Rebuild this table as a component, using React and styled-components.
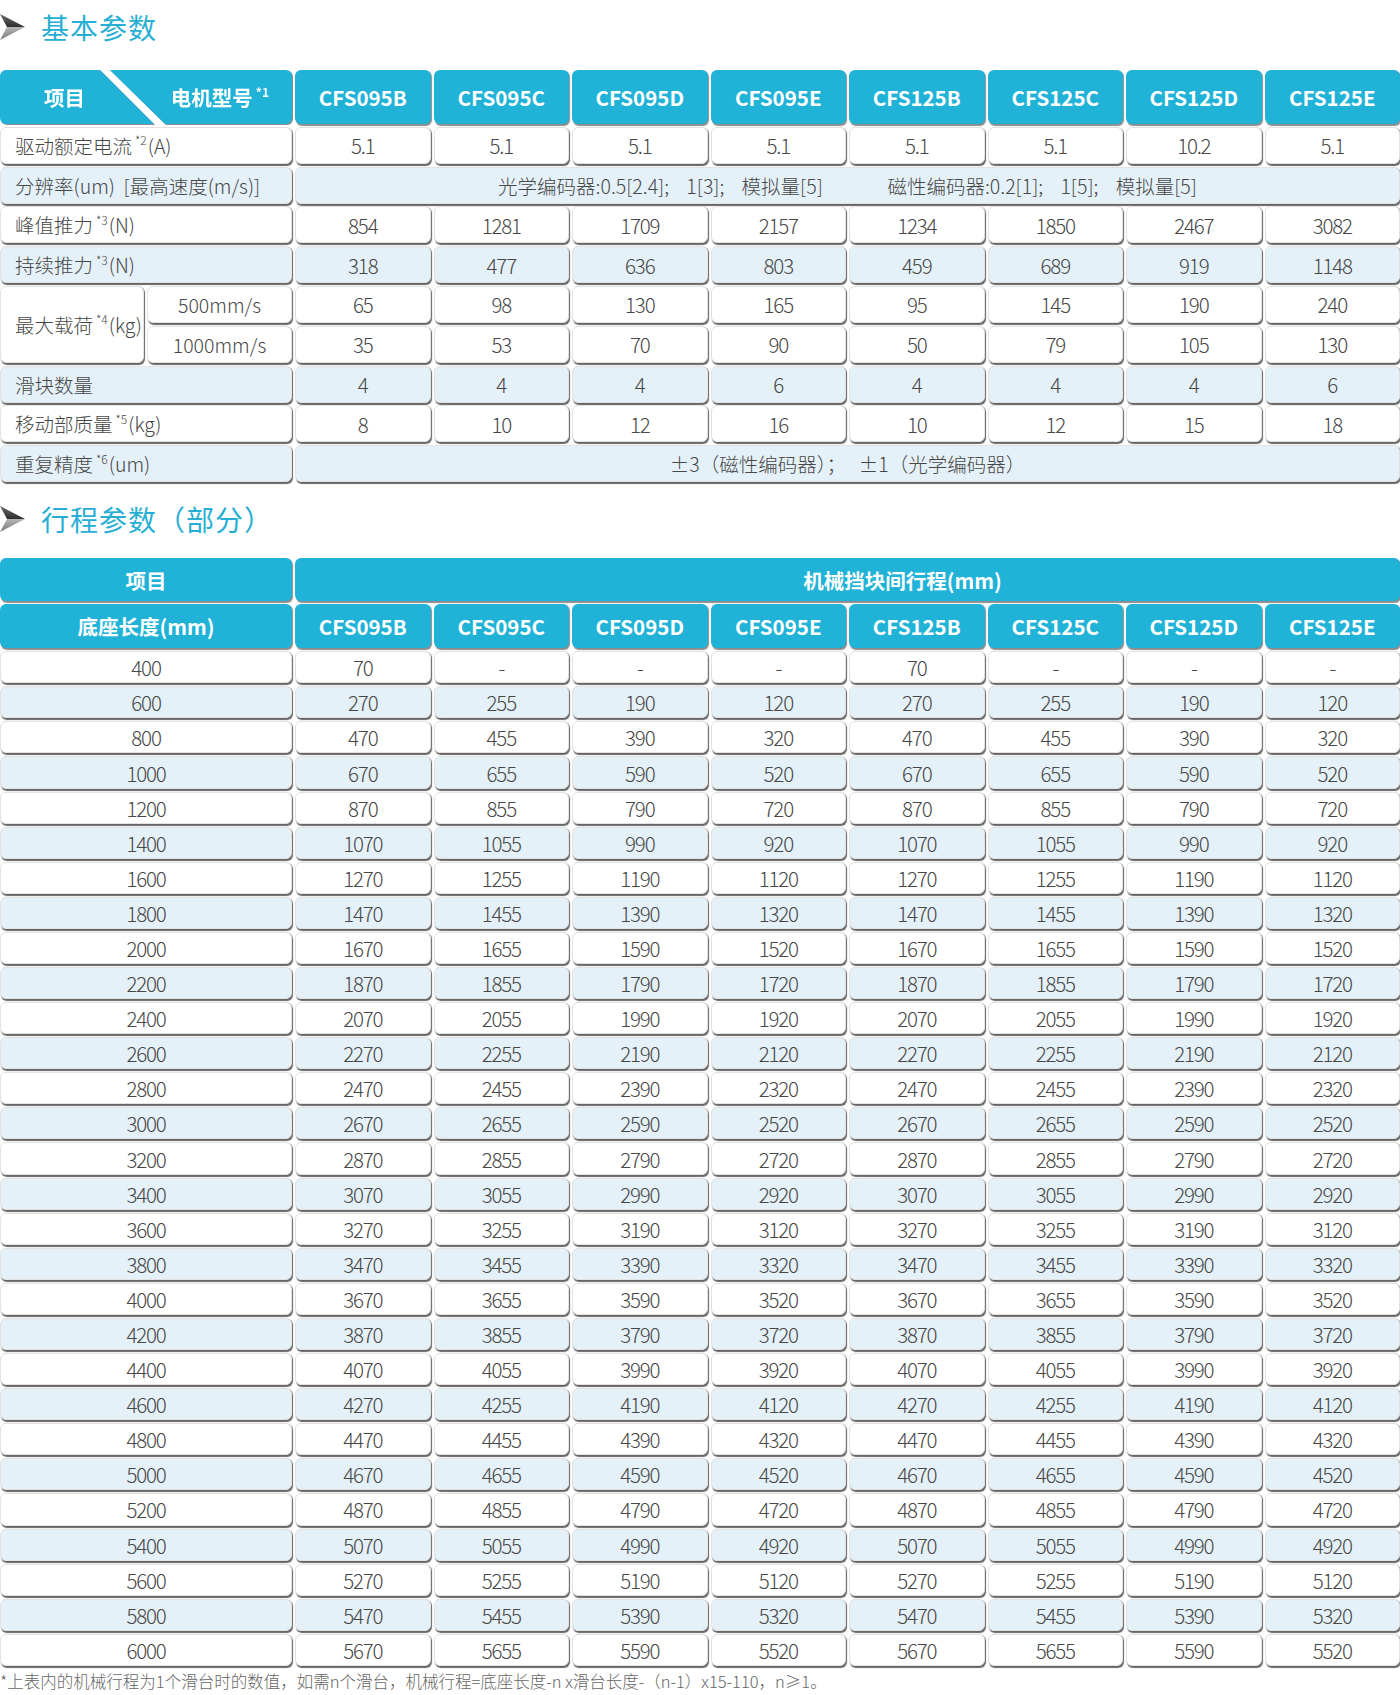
import React from 'react';
import styled, { createGlobalStyle } from 'styled-components';

const CYAN = '#20b3d7';
const LIGHT = '#e5f1f8';

const GlobalStyle = createGlobalStyle`
  html, body {
    margin: 0;
    padding: 0;
    background: #fff;
  }
  body {
    font-family: "Noto Sans CJK SC", "Noto Sans", sans-serif;
    color: #4a4a4a;
  }
`;

const Page = styled.div`
  width: 1400px;
  height: 1695px;
  overflow: hidden;
`;

const Title = styled.h2`
  display: flex;
  align-items: center;
  gap: 15px;
  height: 54px;
  margin: 0 0 ${p => p.$below}px 0;
  font-size: 28px;
  font-weight: 400;
  color: #27aed5;
  letter-spacing: 1px;
`;

const Arrow = () => (
  <svg width="26" height="28" viewBox="0 0 26 28">
    <defs>
      <linearGradient id="arrTop" x1="0" y1="0" x2="0" y2="1">
        <stop offset="0" stopColor="#6a6a6a" />
        <stop offset="1" stopColor="#2e2e2e" />
      </linearGradient>
      <linearGradient id="arrBot" x1="0" y1="0" x2="0" y2="1">
        <stop offset="0" stopColor="#b5b5b5" />
        <stop offset="1" stopColor="#7a7a7a" />
      </linearGradient>
    </defs>
    <polygon points="0,1 25,14 7,14" fill="url(#arrTop)" />
    <polygon points="7,14 25,14 0,27" fill="url(#arrBot)" />
  </svg>
);

const SpecGrid = styled.div`
  display: grid;
  grid-template-columns: 144px 145px repeat(8, 1fr);
  grid-template-rows: 54px repeat(9, 37px);
  column-gap: 3px;
  row-gap: 2.8px;
  margin-bottom: 10px;
`;

const StrokeGrid = styled.div`
  display: grid;
  grid-template-columns: 292px repeat(8, 1fr);
  grid-template-rows: 43px 44px repeat(29, 32.1px);
  column-gap: 3px;
  row-gap: 3px;
`;

const Cell = styled.div`
  grid-column: span ${p => p.$span || 1};
  grid-row: span ${p => p.$rows || 1};
  display: flex;
  align-items: center;
  justify-content: ${p => (p.$left ? 'flex-start' : 'center')};
  padding: 0 ${p => (p.$left ? '14px' : '0')};
  padding-left: ${p => (p.$shift ? `${p.$shift}px` : undefined)};
  box-sizing: border-box;
  border-radius: 6px;
  background: ${p => (p.$blue ? LIGHT : '#fff')};
  border: 1px solid #e2e2e2;
  box-shadow: 1px 1.5px 1px rgba(0, 0, 0, 0.6);
  font-size: ${p => (p.$num ? '20.5px' : '19.5px')};
  font-weight: 300;
  letter-spacing: ${p => (p.$num ? '-1.2px' : '0')};
  white-space: pre;
  color: #474747;
`;

const Head = styled(Cell)`
  background: ${CYAN};
  border: none;
  box-shadow: 1px 1.5px 1px rgba(0, 0, 0, 0.45);
  color: #fff;
  font-weight: 700;
  font-size: 20.5px;
  letter-spacing: 0;
`;

const DiagHead = styled.div`
  grid-column: span 2;
  display: grid;
  filter: drop-shadow(1px 1.5px 0.6px rgba(0, 0, 0, 0.45));
`;

const DiagPart = styled.div`
  grid-area: 1 / 1;
  display: flex;
  align-items: center;
  justify-content: ${p => (p.$right ? 'flex-end' : 'flex-start')};
  padding: ${p => (p.$right ? '0 22px 0 0' : '0 0 0 44px')};
  border-radius: 6px;
  background: ${CYAN};
  clip-path: ${p =>
    p.$right
      ? 'polygon(110px 0, 100% 0, 100% 100%, 165px 100%)'
      : 'polygon(0 0, 100px 0, 154px 100%, 0 100%)'};
  color: #fff;
  font-weight: 700;
  font-size: 20.5px;
`;

const Sup = styled.sup`
  font-size: 12px;
  line-height: 0;
  position: relative;
  top: -5px;
  margin: 0 1px 0 3px;
`;

const Note = styled.p`
  margin: 5px 0 0 0;
  font-size: 16.5px;
  font-weight: 300;
  line-height: 20px;
  color: #666;
`;

const models = ['CFS095B', 'CFS095C', 'CFS095D', 'CFS095E', 'CFS125B', 'CFS125C', 'CFS125D', 'CFS125E'];

const specRows = [
  { label: <>驱动额定电流<Sup>*2</Sup>(A)</>, values: ['5.1', '5.1', '5.1', '5.1', '5.1', '5.1', '10.2', '5.1'] },
  { label: '分辨率(um)  [最高速度(m/s)]', wide: '光学编码器:0.5[2.4];    1[3];    模拟量[5]               磁性编码器:0.2[1];    1[5];    模拟量[5]', blue: true },
  { label: <>峰值推力<Sup>*3</Sup>(N)</>, values: [854, 1281, 1709, 2157, 1234, 1850, 2467, 3082] },
  { label: <>持续推力<Sup>*3</Sup>(N)</>, values: [318, 477, 636, 803, 459, 689, 919, 1148], blue: true },
];

const loadRows = [
  { label: '500mm/s', values: [65, 98, 130, 165, 95, 145, 190, 240] },
  { label: '1000mm/s', values: [35, 53, 70, 90, 50, 79, 105, 130] },
];

const tailRows = [
  { label: '滑块数量', values: [4, 4, 4, 6, 4, 4, 4, 6], blue: true },
  { label: <>移动部质量<Sup>*5</Sup>(kg)</>, values: [8, 10, 12, 16, 10, 12, 15, 18] },
  { label: <>重复精度<Sup>*6</Sup>(um)</>, wide: '±3（磁性编码器）；   ±1（光学编码器）', blue: true },
];

const offsets = [330, 345, 410, 480, 330, 345, 410, 480];
const lengths = Array.from({ length: 29 }, (_, i) => 400 + i * 200);

const SpecRow = ({ row }) => (
  <>
    <Cell $span={2} $left $blue={row.blue}>{row.label}</Cell>
    {row.wide ? (
      <Cell $span={8} $blue={row.blue}>{row.wide}</Cell>
    ) : (
      row.values.map((v, i) => <Cell key={i} $num $blue={row.blue}>{v}</Cell>)
    )}
  </>
);

export default function App() {
  return (
    <Page>
      <GlobalStyle />
      <Title $below={16}><Arrow />基本参数</Title>
      <SpecGrid>
        <DiagHead>
          <DiagPart>项目</DiagPart>
          <DiagPart $right>电机型号<Sup>*1</Sup></DiagPart>
        </DiagHead>
        {models.map(m => <Head key={m}>{m}</Head>)}
        {specRows.map((r, i) => <SpecRow key={i} row={r} />)}
        <Cell $rows={2} $left>最大载荷<Sup>*4</Sup>(kg)</Cell>
        {loadRows.map((r, i) => (
          <React.Fragment key={i}>
            <Cell>{r.label}</Cell>
            {r.values.map((v, j) => <Cell key={j} $num>{v}</Cell>)}
          </React.Fragment>
        ))}
        {tailRows.map((r, i) => <SpecRow key={i} row={r} />)}
      </SpecGrid>

      <Title $below={12}><Arrow />行程参数（部分）</Title>
      <StrokeGrid>
        <Head>项目</Head>
        <Head $span={8} $shift={110}>机械挡块间行程(mm)</Head>
        <Head>底座长度(mm)</Head>
        {models.map(m => <Head key={m}>{m}</Head>)}
        {lengths.map((len, i) => (
          <React.Fragment key={len}>
            <Cell $num $blue={i % 2 === 1}>{len}</Cell>
            {offsets.map((off, j) => (
              <Cell key={j} $num $blue={i % 2 === 1}>
                {len === 400 && off !== 330 ? '-' : len - off}
              </Cell>
            ))}
          </React.Fragment>
        ))}
      </StrokeGrid>
      <Note>*上表内的机械行程为1个滑台时的数值，如需n个滑台，机械行程=底座长度-n x滑台长度-（n-1）x15-110，n≥1。</Note>
    </Page>
  );
}
